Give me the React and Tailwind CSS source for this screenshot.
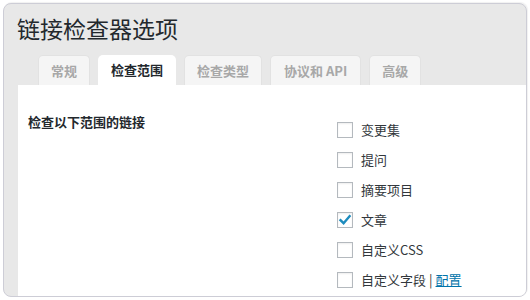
const tabs = [
  { label: '常规' },
  { label: '检查范围', active: true },
  { label: '检查类型' },
  { label: '协议和 API', wide: true },
  { label: '高级' },
];

const options = [
  { label: '变更集' },
  { label: '提问' },
  { label: '摘要项目' },
  { label: '文章', checked: true },
  { label: '自定义CSS' },
  { label: '自定义字段', link: '配置' },
];

function Checkbox({ checked }) {
  return (
    <span className="w-4 h-4 border border-[#b4b9be] bg-white shadow-[inset_0_1px_2px_rgba(0,0,0,0.07)] flex items-center justify-center shrink-0">
      {checked && (
        <svg width="14" height="14" viewBox="0 0 14 14">
          <path d="M2.5 7.2 L5.6 10.2 L11.6 3.2" fill="none" stroke="#1e8cbe" strokeWidth="2.4" strokeLinecap="square" />
        </svg>
      )}
    </span>
  );
}

export default function App() {
  return (
    <div
      className="w-[530px] h-[300px] bg-white pt-[3px] pl-[3px] text-[#32373c]"
      style={{ fontFamily: '"Noto Sans CJK SC", "Liberation Sans", sans-serif' }}
    >
      <div className="w-[524px] h-[294px] rounded-[8px] border border-[#cdcdd6] bg-[#e8e8e8] overflow-hidden flex flex-col shadow-[1px_-1px_1px_rgba(0,0,0,0.06)]">
        <h1 className="pl-[13px] pt-[9px] text-[23px] leading-[30px] text-[#23282d] font-normal">链接检查器选项</h1>

        <div className="flex items-end gap-[8px] pl-[34px] mt-[12px] h-[30px]">
          {tabs.map((t) => (
            <div
              key={t.label}
              className={
                t.active
                  ? 'h-[30px] px-[13px] rounded-t-[5px] bg-white text-[#23282d] text-[13px] font-bold flex items-center'
                  : t.wide
                  ? 'h-[30px] px-[13px] rounded-t-[5px] bg-[#f5f5f5] border border-b-0 border-[#e2e2e2] text-[#a8a8a8] text-[13px] font-bold flex items-center'
                  : 'h-[30px] px-[12px] rounded-t-[5px] bg-[#f5f5f5] border border-b-0 border-[#e2e2e2] text-[#a8a8a8] text-[13px] font-bold flex items-center'
              }
            >
              {t.label}
            </div>
          ))}
        </div>

        <div className="flex-1 ml-[14px] bg-white flex pt-[27px]">
          <div className="w-[319px] pl-[10px] text-[13px] font-bold leading-[20px] text-[#23282d]">检查以下范围的链接</div>
          <div className="flex flex-col gap-[14px] pt-[10px]">
            {options.map((o) => (
              <div key={o.label} className="h-4 flex items-center gap-[8px] text-[13px]">
                <Checkbox checked={o.checked} />
                <span>
                  {o.label}
                  {o.link && (
                    <>
                      <span className="mx-[3px]">|</span>
                      <a className="text-[#0073aa] underline">{o.link}</a>
                    </>
                  )}
                </span>
              </div>
            ))}
          </div>
        </div>
      </div>
    </div>
  );
}
